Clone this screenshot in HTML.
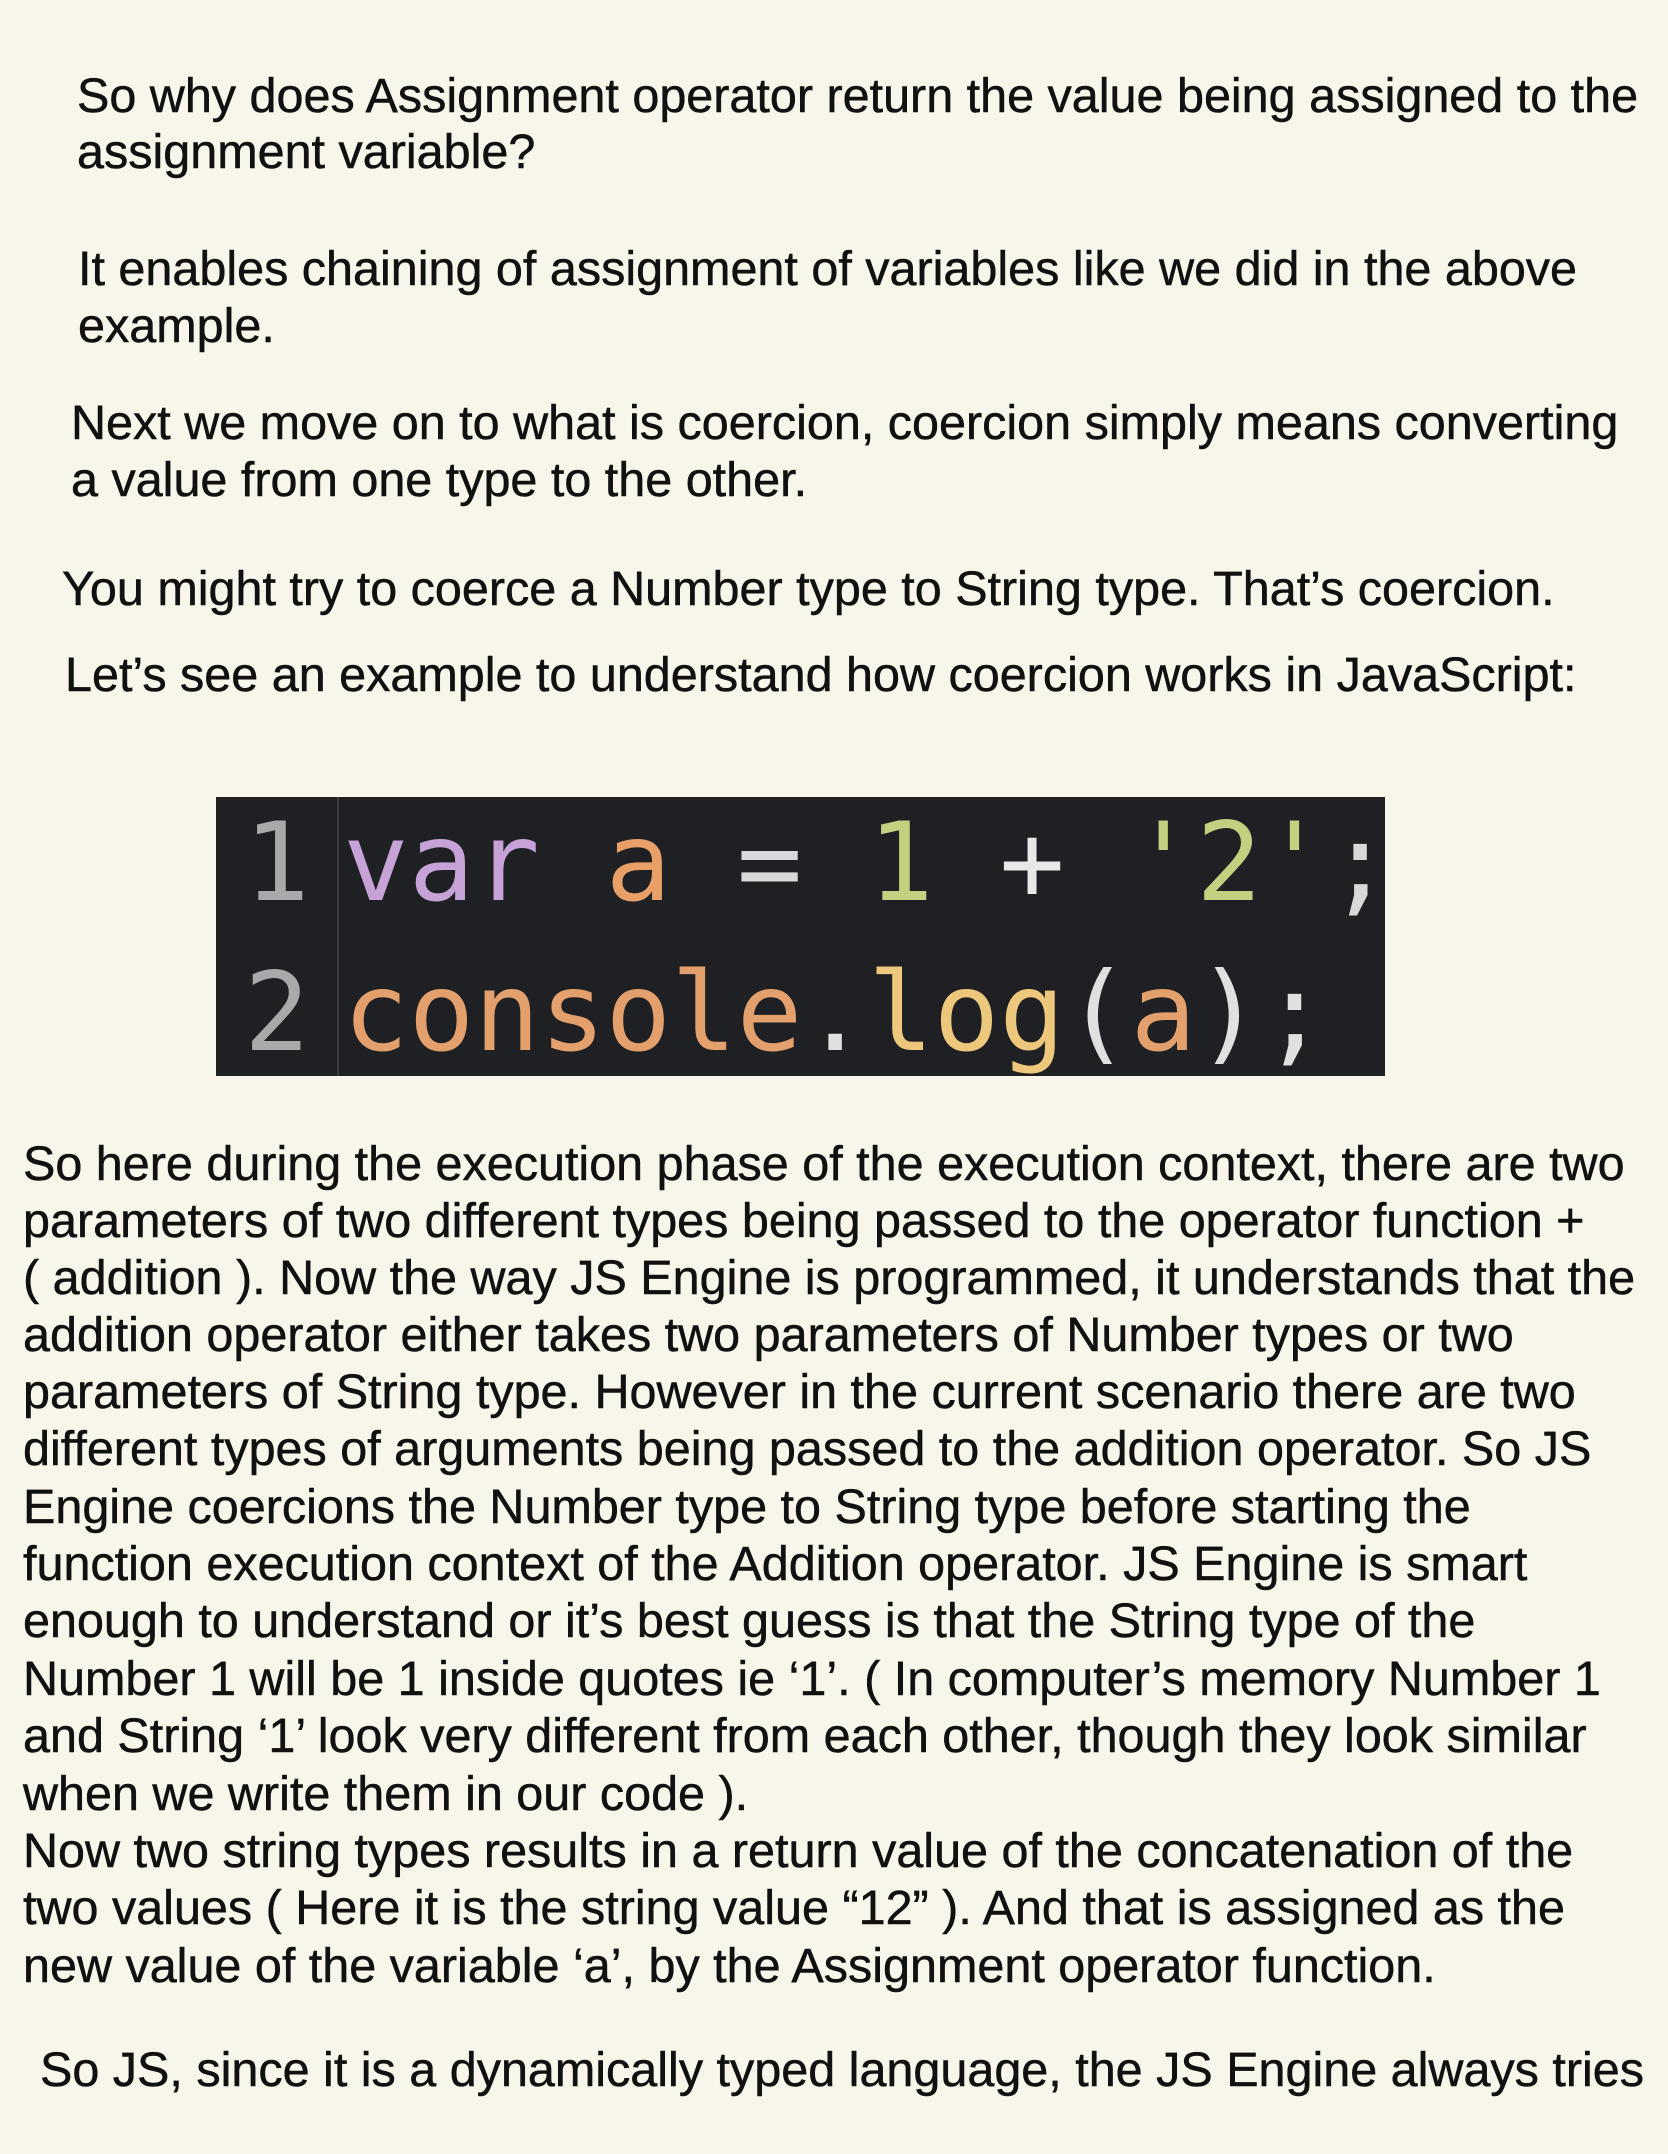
<!DOCTYPE html>
<html><head><meta charset="utf-8"><style>
html,body{margin:0;padding:0}
body{width:1668px;height:2154px;background:#f8f6ea;position:relative;overflow:hidden;font-family:"Liberation Sans",Arial,sans-serif;color:#111;}
.l{position:absolute;font-size:48.5px;line-height:57px;white-space:nowrap;-webkit-text-stroke:0.5px #111;}
.code{position:absolute;left:216px;top:797px;width:1169px;height:279px;background:#1f2023;}
.sep{position:absolute;left:121px;top:0;width:2px;height:279px;background:#3a3b3e;}
.cl{position:absolute;font-family:"DejaVu Sans Mono",monospace;font-size:109px;line-height:108px;white-space:pre;}
</style></head><body>
<div class="l" style="left:77px;top:68px">So why does Assignment operator return the value being assigned to the</div>
<div class="l" style="left:77px;top:124px">assignment variable?</div>
<div class="l" style="left:78px;top:241px">It enables chaining of assignment of variables like we did in the above</div>
<div class="l" style="left:78px;top:298px">example.</div>
<div class="l" style="left:71px;top:395px">Next we move on to what is coercion, coercion simply means converting</div>
<div class="l" style="left:71px;top:452px">a value from one type to the other.</div>
<div class="l" style="left:62px;top:561px">You might try to coerce a Number type to String type. That’s coercion.</div>
<div class="l" style="left:65px;top:647px">Let’s see an example to understand how coercion works in JavaScript:</div>

<div class="code">
<div class="sep"></div>
<div class="cl" style="left:28px;top:12px;color:#a9a9a9">1</div>
<div class="cl" style="left:28px;top:162px;color:#a9a9a9">2</div>
<div class="cl" style="left:127px;top:12px"><span style="color:#c6a2d6">var</span> <span style="color:#e8a068">a</span> <span style="color:#d8d8d8">=</span> <span style="color:#c3d07f">1</span> <span style="color:#e8e8e8">+</span> <span style="color:#c3d07f">'2'</span><span style="color:#d8d8d8">;</span></div>
<div class="cl" style="left:127px;top:162px"><span style="color:#e4a06c">console</span><span style="color:#e0e0e0">.</span><span style="color:#ecc77c">log</span><span style="color:#e0e0e0">(</span><span style="color:#e4a06c">a</span><span style="color:#e0e0e0">);</span></div>
</div>

<div class="l" style="left:23px;top:1136px">So here during the execution phase of the execution context, there are two</div>
<div class="l" style="left:23px;top:1193px">parameters of two different types being passed to the operator function +</div>
<div class="l" style="left:23px;top:1250px">( addition ). Now the way JS Engine is programmed, it understands that the</div>
<div class="l" style="left:23px;top:1307px">addition operator either takes two parameters of Number types or two</div>
<div class="l" style="left:23px;top:1364px">parameters of String type. However in the current scenario there are two</div>
<div class="l" style="left:23px;top:1421px">different types of arguments being passed to the addition operator. So JS</div>
<div class="l" style="left:23px;top:1479px">Engine coercions the Number type to String type before starting the</div>
<div class="l" style="left:23px;top:1536px">function execution context of the Addition operator. JS Engine is smart</div>
<div class="l" style="left:23px;top:1593px">enough to understand or it’s best guess is that the String type of the</div>
<div class="l" style="left:23px;top:1651px">Number 1 will be 1 inside quotes ie ‘1’. ( In computer’s memory Number 1</div>
<div class="l" style="left:23px;top:1708px">and String ‘1’ look very different from each other, though they look similar</div>
<div class="l" style="left:23px;top:1766px">when we write them in our code ).</div>
<div class="l" style="left:23px;top:1823px">Now two string types results in a return value of the concatenation of the</div>
<div class="l" style="left:23px;top:1880px">two values ( Here it is the string value “12” ). And that is assigned as the</div>
<div class="l" style="left:23px;top:1938px">new value of the variable ‘a’, by the Assignment operator function.</div>
<div class="l" style="left:40px;top:2042px">So JS, since it is a dynamically typed language, the JS Engine always tries</div>
</body></html>
